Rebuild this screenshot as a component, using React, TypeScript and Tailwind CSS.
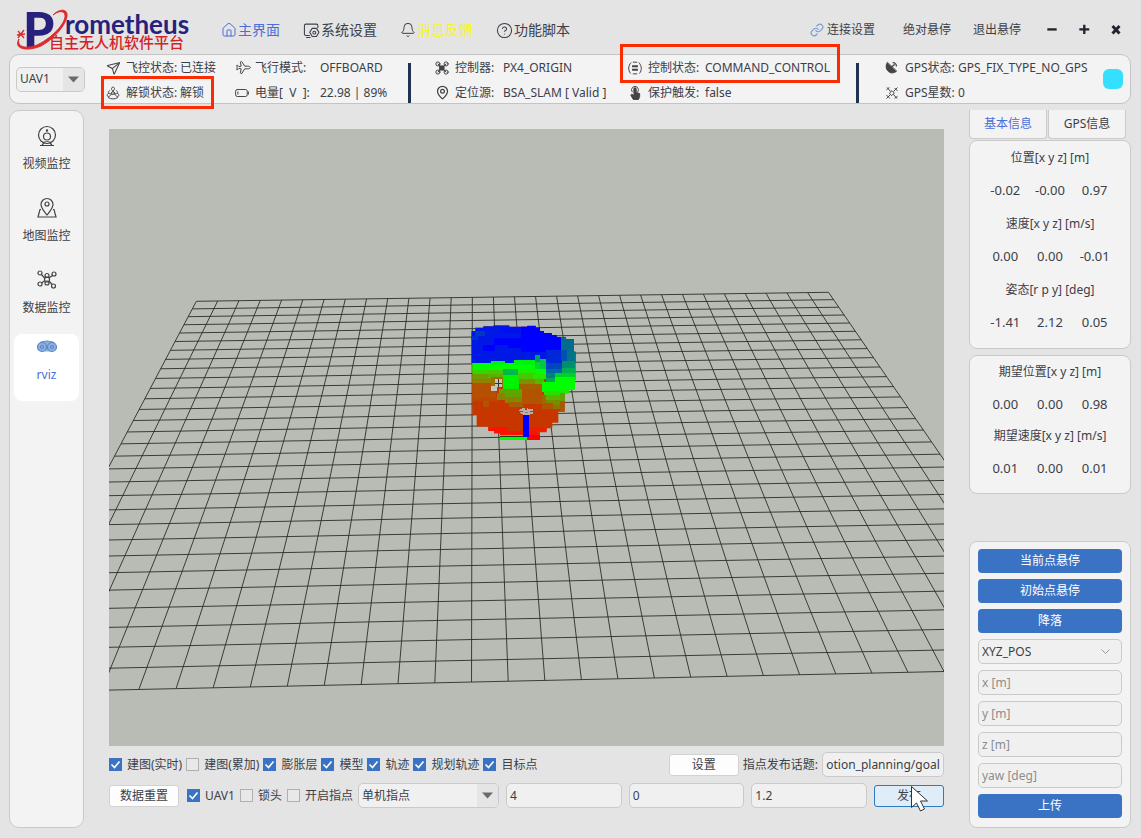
import { useEffect, useRef, type ReactNode } from "react";
import { Bell, CircleHelp, House, Link, MapPin, Plane, Send } from "lucide-react";

const GRID_CELLS = 30;

// corners of the ground plane inside the 835x617 viewport
const CORNERS = [
  [87.3, 172.3],
  [719.5, 163.3],
  [978.5, 539.3],
  [-119.5, 563.8],
];

// maps the unit square onto the ground plane in perspective
const project = (u: number, v: number) => {
  const [[x0, y0], [x1, y1], [x2, y2], [x3, y3]] = CORNERS;
  const dx1 = x1 - x2;
  const dx2 = x3 - x2;
  const dx3 = x0 - x1 + x2 - x3;
  const dy1 = y1 - y2;
  const dy2 = y3 - y2;
  const dy3 = y0 - y1 + y2 - y3;
  const det = dx1 * dy2 - dx2 * dy1;
  const g = (dx3 * dy2 - dx2 * dy3) / det;
  const h = (dx1 * dy3 - dx3 * dy1) / det;
  const w = g * u + h * v + 1;
  const x = ((x1 - x0 + g * x1) * u + (x3 - x0 + h * x3) * v + x0) / w;
  const y = ((y1 - y0 + g * y1) * u + (y3 - y0 + h * y3) * v + y0) / w;
  return `${x.toFixed(2)} ${y.toFixed(2)}`;
};

const gridPath = Array.from({ length: GRID_CELLS + 1 }, (_, i) => {
  const t = i / GRID_CELLS;
  return `M${project(t, 0)}L${project(t, 1)}M${project(0, t)}L${project(1, t)}`;
}).join("");

// voxels of the point cloud: x, y, width, height, colour
const voxels: [number, number, number, number, string][] = [
  [94, 75, 313, 115, "#0018e6"],
  [106, 93, 30, 16, "#0038c0"],
  [94, 109, 20, 12, "#0030d0"],
  [180, 84, 60, 14, "#0010f0"],
  [163, 114, 90, 22, "#0000ff"],
  [130, 135, 36, 18, "#0000ff"],
  [204, 126, 130, 18, "#0000ff"],
  [243, 77, 90, 80, "#0000ff"],
  [300, 96, 62, 58, "#0000ff"],
  [318, 150, 46, 44, "#0028d8"],
  [300, 160, 22, 14, "#0018e6"],
  [362, 110, 46, 48, "#006c90"],
  [362, 150, 18, 34, "#0050b0"],
  [380, 156, 28, 34, "#007488"],
  [366, 184, 42, 22, "#009070"],
  [366, 204, 42, 16, "#00b050"],
  [318, 190, 48, 18, "#0044c0"],
  [318, 206, 48, 16, "#0068a0"],
  [318, 220, 36, 16, "#008080"],
  [318, 234, 30, 12, "#00a858"],
  [345, 218, 62, 18, "#00d028"],
  [345, 232, 62, 38, "#00ff00"],
  [97, 188, 190, 24, "#00ff00"],
  [154, 184, 40, 10, "#00f010"],
  [222, 180, 70, 16, "#00f010"],
  [285, 166, 16, 24, "#00a060"],
  [285, 186, 32, 22, "#00d830"],
  [300, 178, 17, 28, "#00c840"],
  [97, 210, 48, 12, "#30d800"],
  [145, 210, 50, 12, "#48c800"],
  [97, 222, 60, 14, "#6c9c00"],
  [140, 222, 52, 12, "#58b000"],
  [97, 236, 56, 14, "#948000"],
  [97, 248, 70, 48, "#b45000"],
  [97, 290, 80, 14, "#bc4800"],
  [188, 208, 46, 20, "#00b850"],
  [188, 226, 48, 40, "#00f400"],
  [234, 208, 56, 14, "#18f000"],
  [288, 206, 29, 18, "#00ff00"],
  [234, 220, 50, 18, "#48c800"],
  [280, 222, 37, 16, "#28e400"],
  [236, 236, 50, 18, "#7c9000"],
  [284, 238, 28, 16, "#54b800"],
  [154, 232, 34, 28, "#9c7000"],
  [236, 252, 70, 18, "#a46000"],
  [306, 246, 62, 30, "#00ff00"],
  [312, 274, 56, 14, "#30dc00"],
  [318, 286, 50, 16, "#58b400"],
  [318, 300, 44, 16, "#788c00"],
  [338, 314, 30, 12, "#907400"],
  [366, 268, 20, 14, "#20e800"],
  [360, 280, 14, 26, "#58a800"],
  [360, 304, 14, 32, "#a85800"],
  [178, 266, 68, 28, "#60a400"],
  [170, 280, 24, 20, "#8c8000"],
  [196, 292, 50, 16, "#888400"],
  [206, 306, 42, 14, "#a46000"],
  [247, 268, 60, 44, "#b05400"],
  [306, 286, 12, 26, "#a06800"],
  [306, 310, 32, 18, "#b05400"],
  [128, 304, 20, 18, "#b05400"],
  [145, 382, 60, 24, "#ff1000"],
  [180, 392, 110, 28, "#f41400"],
  [268, 380, 56, 14, "#f01c00"],
  [240, 404, 60, 16, "#ff0000"],
];

const Viewport = () => (
  <svg
    className="block min-h-0 w-full flex-1 bg-[#b9bcb4]"
    viewBox="0 0 835 617"
    preserveAspectRatio="xMidYMid slice"
    role="img"
    aria-label="rviz"
  >
    <path d={gridPath} stroke="#2c2e2a" strokeWidth="1" strokeOpacity="0.9" fill="none" />
    <clipPath id="cloud">
      <path d="M94 93H106V83H130V79H160V76H208V80H262V77H287V83H300V93H312V99H335V105H350V112H378V118H402V155H407V240H405V270H387V280H374V335H355V368H337V385H320V397H300V420H262V408H205V404H180V400H162V393H145V380H110V345H97V190H94Z" />
    </clipPath>
    <g transform="translate(331 171) scale(0.3333)" shapeRendering="crispEdges">
      <g clipPath="url(#cloud)">
        <rect x="90" y="70" width="320" height="352" fill="#c83600" />
        {voxels.map(([x, y, w, h, fill], i) => (
          <rect key={i} x={x} y={y} width={w} height={h} fill={fill} />
        ))}
      </g>
      <path d="M164 238h22v24h-14v12h-18v-16h10z" fill="#c4c4be" />
      <path d="M164 250h22M176 238v24" stroke="#333" strokeWidth="3" />
      <path d="M180 406h80v14h-80z" fill="#00ff00" />
      <path d="M180 411h80" stroke="#1c3c10" strokeWidth="3" />
      <path d="M250 342h16v70h-16z" fill="#0000ff" />
      <path
        d="M238 332l16-6M262 328l18 4M242 340l14-4M264 338l14 2M252 332h14v10h-14z"
        stroke="#b8b0a8"
        strokeWidth="6"
        fill="#888"
      />
    </g>
  </svg>
);

const Logo = () => (
  <svg className="h-[44px] w-[176px] shrink-0 overflow-visible" viewBox="0 0 176 44" role="img">
    <text x="6" y="40" fill="#27207c" fontFamily="Lato" fontWeight="900" fontSize="50">
      P
    </text>
    <text x="48" y="26" fill="#27207c" fontFamily="Lato" fontWeight="700" fontSize="26">
      rometheus
    </text>
    <text
      x="32"
      y="40"
      fill="#d2232a"
      fontFamily="Noto Sans CJK SC"
      fontWeight="500"
      fontSize="15"
    >
      自主无人机软件平台
    </text>
    <path
      d="M2 31C-1 40 12 42 24 35C38 27 49 14 48 7C47 2 41 3 36 7C43 0 51 1 50 8C49 17 37 31 24 38C10 44 -4 41 2 31Z"
      fill="#dc2b2b"
      stroke="#dc2b2b"
    />
    <path d="M1 23l6 7M7 22l-6 8M0 27l8-1" stroke="#dc2b2b" strokeWidth="1.4" />
  </svg>
);

const Svg = ({
  children,
  size = 14,
  weight = 1.7,
}: {
  children: ReactNode;
  size?: number;
  weight?: number;
}) => (
  <svg
    width={size}
    height={size}
    viewBox="0 0 24 24"
    fill="none"
    stroke="currentColor"
    strokeWidth={weight}
    strokeLinecap="round"
    strokeLinejoin="round"
    aria-hidden="true"
  >
    {children}
  </svg>
);

const RotorIcon = () => (
  <Svg>
    <circle cx="12" cy="12" r="2.5" />
    <path d="M12 9C8 6 9 2 12 2s4 4 0 7M9 14c-2 5-7 5-7 2s4-5 7-2M15 14c2 5 7 5 7 2s-4-5-7-2M4 20c4 3 12 3 16 0M6 8c-2 2-2 3-2 4M18 8c2 2 2 3 2 4" />
  </Svg>
);

const BatteryIcon = () => (
  <Svg>
    <rect x="1" y="6" width="20" height="12" rx="3" />
    <path d="M23 10v4M5 10v4" />
  </Svg>
);

const QuadIcon = () => (
  <Svg>
    <circle cx="5" cy="5" r="3.5" />
    <circle cx="19" cy="5" r="3.5" />
    <circle cx="5" cy="19" r="3.5" />
    <circle cx="19" cy="19" r="3.5" />
    <path d="M5 5l14 14M19 5L5 19" />
    <rect x="8.500" y="8.500" width="7" height="7" fill="currentColor" />
  </Svg>
);

const ControlIcon = () => (
  <Svg>
    <path d="M5 3C0 8 0 16 4 21M19 3c5 6 5 13 1 18M9 2h6M9 22h6" />
    <path d="M7 9h10M7 15h10" strokeWidth="3.500" strokeLinecap="butt" />
  </Svg>
);

const TouchIcon = () => (
  <Svg>
    <path d="M7 10a6 6 0 1 1 10 0" />
    <path
      d="M10 5a2 2 0 0 1 4 0v6l6 2v5l-2 5H9l-4-7 1-2 4 2z"
      fill="currentColor"
    />
  </Svg>
);

const DishIcon = () => (
  <Svg size={13}>
    <path d="M4 3C-1 11 4 21 12 22c4 0 7-1 9-3z" fill="currentColor" />
    <path d="M12 11l5-4M15 3c3 0 6 3 6 6" strokeWidth="2.500" />
  </Svg>
);

const SatelliteIcon = () => (
  <Svg>
    <path d="M8 12l4-4 4 4-4 4zM4 3l5 6M20 21l-5-6M15 9l6-6M17 4l4 4M3 21l6-6M3 16l5 5M3 6l4-3M17 21l4-3" />
  </Svg>
);

const GearScreenIcon = () => (
  <Svg size={17} weight={1.5}>
    <path d="M9 19H4a2 2 0 0 1-2-2V5a2 2 0 0 1 2-2h15a2 2 0 0 1 2 2v3M5 22h5" />
    <path d="M13 9h6l3.500 5.500-3.500 6h-6l-3.500-6z" />
    <circle cx="16" cy="15" r="2" />
  </Svg>
);

const CameraIcon = () => (
  <svg width="22" height="24" viewBox="0 0 22 24" fill="none" stroke="#444" strokeWidth="1.2">
    <circle cx="11" cy="11" r="8.500" />
    <circle cx="11" cy="12.500" r="3.500" />
    <circle cx="11" cy="6.500" r="0.600" fill="#444" />
    <path d="M8 19l-2 2M14 19l2 2M4 21.500h14M7 18.500c2-1 6-1 8 0" />
  </svg>
);

const MapIcon = () => (
  <svg width="22" height="24" viewBox="0 0 22 24" fill="none" stroke="#444" strokeWidth="1.2">
    <path d="M11 19C7 14 5 12 5 8.500a6 6 0 0 1 12 0C17 12 15 14 11 19z" />
    <circle cx="11" cy="8" r="2" />
    <path d="M5 13.500H4L2 21h18l-2-7.500h-1" />
  </svg>
);

const DataIcon = () => (
  <svg width="22" height="24" viewBox="0 0 22 24" fill="none" stroke="#444" strokeWidth="1.2">
    <circle cx="4" cy="5" r="2" />
    <circle cx="18" cy="6" r="2" />
    <circle cx="4" cy="16" r="2" />
    <circle cx="17.500" cy="18" r="2" />
    <circle cx="11" cy="7.500" r="2" />
    <circle cx="11" cy="11.500" r="2.500" />
    <circle cx="11" cy="15" r="2" />
    <path d="M5.500 6.500l3.500 4M16.500 7.500L13 10M5.500 15l3.500-2.500M16 16.500l-3-3.500" />
  </svg>
);

const RvizIcon = () => (
  <svg width="22" height="24" viewBox="0 0 22 24" fill="none" stroke="#5c86c4" strokeWidth="1.2">
    <path d="M4 2.500q7-3 14 0l3 5-5 4H6l-5-4z" fill="#8fb0df" stroke="none" />
    <circle cx="6" cy="7" r="4.500" fill="#8fb0df" />
    <circle cx="16" cy="7" r="4.500" fill="#8fb0df" />
    <circle cx="6" cy="7" r="1.500" />
    <circle cx="16" cy="7" r="1.500" />
    <path d="M4 2.500q7-3 14 0" />
  </svg>
);

const Triangle = () => (
  <span className="pointer-events-none absolute inset-y-px right-px grid w-[21px] place-items-center rounded-r bg-[#e5e5e5]">
    <svg width="11" height="7" viewBox="0 0 11 7" fill="#6a6a6a" aria-hidden="true">
      <path d="M0 0.500h11L5.500 6.500z" />
    </svg>
  </span>
);

const Status = ({
  icon,
  label,
  value,
  labelWidth,
  marked,
}: {
  icon: ReactNode;
  label: string;
  value: string;
  labelWidth: string;
  marked?: string;
}) => (
  <div className="relative flex h-[25px] items-center whitespace-pre">
    <span className="w-5 shrink-0 text-[#444]">{icon}</span>
    <span className={labelWidth}>{label}</span>
    <span>{value}</span>
    {marked && (
      <span className={`pointer-events-none absolute z-10 border-3 border-[#fb2b04] ${marked}`} />
    )}
  </div>
);

const Check = ({ label, checked = false }: { label: string; checked?: boolean }) => (
  <label className="flex shrink-0 items-center gap-[5px]">
    <span className="relative block size-[13px]">
      <input
        type="checkbox"
        defaultChecked={checked}
        className="peer block size-[13px] appearance-none border border-[#b0b0b0] bg-[#e8e8e8] checked:border-[#3a73c4] checked:bg-[#3a73c4]"
      />
      <svg
        className="pointer-events-none invisible absolute inset-0 peer-checked:visible"
        viewBox="0 0 13 13"
        fill="none"
        stroke="#fff"
        strokeWidth="1.600"
      >
        <path d="M2.500 6.500l3 3 5-6" />
      </svg>
    </span>
    {label}
  </label>
);

const fieldClass =
  "h-[25px] w-full min-w-0 rounded-[5px] border border-[#cacaca] bg-[#f0f0f0] px-[3px] placeholder:text-[#8c8c8c]";

const Values = ({ values }: { values: string[] }) => (
  <div className="grid grid-cols-3 px-[13px] text-[13px]">
    {values.map((value, i) => (
      <span key={i}>{value}</span>
    ))}
  </div>
);

const blueButton = "h-6 w-full rounded bg-[#3a73c4] text-white";

const whiteButton =
  "h-[22px] w-[70px] shrink-0 rounded-[3px] border border-[#d2d2d2] bg-[#fdfdfd]";

const menu = [
  { label: "视频监控", icon: <CameraIcon /> },
  { label: "地图监控", icon: <MapIcon /> },
  { label: "数据监控", icon: <DataIcon /> },
];

const App = () => {
  const topic = useRef<HTMLInputElement>(null);

  // keep the end of the topic name in view
  useEffect(() => {
    if (topic.current) topic.current.scrollLeft = topic.current.scrollWidth;
  }, []);

  return (
    <div className="flex h-screen min-h-[780px] min-w-[1100px] flex-col bg-[#e4e4e4] pr-[10px] pb-[10px] pl-[9px] font-['Noto_Sans','Noto_Sans_CJK_SC',sans-serif] text-[12px] leading-4 text-[#3c4048]">
      <header className="flex h-[54px] shrink-0 items-center pt-[6px] pl-2">
        <Logo />
        <nav className="flex items-center gap-[23px] pl-7 text-[14px]">
          <a href="#" className="flex items-center gap-px text-[#4a6fd8]">
            <House size={16} strokeWidth={1.5} /> 主界面
          </a>
          <a href="#" className="flex items-center gap-px">
            <GearScreenIcon /> 系统设置
          </a>
          <a href="#" className="flex items-center gap-px">
            <Bell size={16} strokeWidth={1.5} />
            <span className="text-[#f4f42c]">消息反馈</span>
          </a>
          <a href="#" className="flex items-center gap-px">
            <CircleHelp size={17} strokeWidth={1.5} /> 功能脚本
          </a>
        </nav>
        <div className="ml-auto flex items-center">
          <button className="mr-7 flex items-center gap-[3px]">
            <Link size={14} className="text-[#7c9cd0]" /> 连接设置
          </button>
          <button className="mr-[22px]">绝对悬停</button>
          <button className="mr-6">退出悬停</button>
          <div className="flex gap-[18px] pr-2 text-[#20242c]">
            <button aria-label="minimize">
              <Svg>
                <path d="M4 11h16" strokeWidth="4" strokeLinecap="butt" />
              </Svg>
            </button>
            <button aria-label="maximize">
              <Svg>
                <path d="M4 11h17M12.500 3v16" strokeWidth="4" strokeLinecap="butt" />
              </Svg>
            </button>
            <button aria-label="close">
              <Svg>
                <path d="M6 5l12 13M18 5L6 18" strokeWidth="5" strokeLinecap="butt" />
              </Svg>
            </button>
          </div>
        </div>
      </header>

      <section className="flex h-[50px] shrink-0 rounded-[10px] border border-[#c4c4c4] bg-[#f3f3f3]">
        <div className="relative mr-[21px] ml-[6px] h-[25px] w-[69px] shrink-0 self-center">
          <select aria-label="UAV" className={`${fieldClass} appearance-none`}>
            <option>UAV1</option>
          </select>
          <Triangle />
        </div>
        <div className="w-[129px] shrink-0">
          <Status icon={<Send size={14} strokeWidth={1.8} className="rotate-6" />} label="飞控状态:" value="已连接" labelWidth="w-[54px]" />
          <Status
            icon={<RotorIcon />}
            label="解锁状态:"
            value="解锁"
            labelWidth="w-[54px]"
            marked="-top-1 right-[21px] -bottom-1 -left-[5px]"
          />
        </div>
        <div className="w-[173px] shrink-0">
          <Status icon={<Plane size={15} strokeWidth={1.5} className="rotate-45" />} label="飞行模式:" value="OFFBOARD" labelWidth="w-[65px]" />
          <Status icon={<BatteryIcon />} label="电量[  V  ]:" value="22.98 | 89%" labelWidth="w-[65px]" />
        </div>
        <div className="mt-2 mr-6 w-[3px] shrink-0 bg-[#1f3350]" />
        <div className="w-[193px] shrink-0">
          <Status icon={<QuadIcon />} label="控制器:" value="PX4_ORIGIN" labelWidth="w-[48px]" />
          <Status icon={<MapPin size={15} strokeWidth={2} />} label="定位源:" value="BSA_SLAM [ Valid ]" labelWidth="w-[48px]" />
        </div>
        <div className="w-[228px] shrink-0">
          <Status
            icon={<ControlIcon />}
            label="控制状态:"
            value="COMMAND_CONTROL"
            labelWidth="w-[57px]"
            marked="-top-[11px] right-4 -bottom-[3px] -left-2"
          />
          <Status icon={<TouchIcon />} label="保护触发:" value="false" labelWidth="w-[57px]" />
        </div>
        <div className="mt-2 mr-[26px] w-[3px] shrink-0 bg-[#1f3350]" />
        <div className="flex-1">
          <Status icon={<DishIcon />} label="GPS状态:" value="GPS_FIX_TYPE_NO_GPS" labelWidth="w-[53px]" />
          <Status icon={<SatelliteIcon />} label="GPS星数:" value="0" labelWidth="w-[53px]" />
        </div>
        <div className="mr-[7px] size-5 shrink-0 self-center rounded-[6px] bg-[#35e0ff]" />
      </section>

      <main className="mt-[6px] flex min-h-0 flex-1 gap-[25px]">
        <aside className="flex w-[75px] shrink-0 flex-col gap-[5px] rounded-[10px] border border-[#cacaca] bg-[#f3f3f3] px-1 pt-[7px]">
          {menu.map(({ label, icon }) => (
            <button key={label} className="flex h-[67px] flex-col items-center gap-2 pt-[6px]">
              {icon}
              {label}
            </button>
          ))}
          <button className="flex h-[67px] flex-col items-center gap-[3px] rounded-lg bg-white pt-[6px] text-[#4a6fd8]">
            <RvizIcon />
            rviz
          </button>
        </aside>

        <section className="flex min-w-0 flex-1 flex-col pt-[19px] pb-5">
          <Viewport />
          <div className="mt-[6px] flex h-[25px] items-center gap-1">
            <Check label="建图(实时)" checked />
            <Check label="建图(累加)" />
            <Check label="膨胀层" checked />
            <Check label="模型" checked />
            <Check label="轨迹" checked />
            <Check label="规划轨迹" checked />
            <Check label="目标点" checked />
            <button className={`${whiteButton} ml-auto`}>设置</button>
            <label htmlFor="topic" className="shrink-0">
              指点发布话题:
            </label>
            <div className="w-[122px] shrink-0">
              <input id="topic" ref={topic} className={fieldClass} defaultValue="motion_planning/goal" />
            </div>
          </div>
          <div className="mt-[6px] flex h-[25px] items-center gap-[7px]">
            <div className="flex shrink-0 items-center gap-[5px]">
              <button className={`${whiteButton} mr-[3px]`}>数据重置</button>
              <Check label="UAV1" checked />
              <Check label="锁头" />
              <Check label="开启指点" />
              <div className="relative w-[141px] shrink-0">
                <select aria-label="指点" className={`${fieldClass} block appearance-none`}>
                  <option>单机指点</option>
                </select>
                <Triangle />
              </div>
            </div>
            <input aria-label="x" className={fieldClass} defaultValue="4" />
            <input aria-label="y" className={fieldClass} defaultValue="0" />
            <input aria-label="z" className={fieldClass} defaultValue="1.2" />
            <button className="relative h-[22px] w-[70px] shrink-0 rounded-[3px] border border-[#2a7ac4] bg-[#dfedf8]">
              发布
              <svg
                className="absolute -top-px left-[35px]"
                width="20"
                height="27"
                viewBox="0 0 20 27"
                fill="#fff"
                stroke="#333"
                aria-hidden="true"
              >
                <path d="M1.500 1.500v21l5-4.500 4 8 4-2-4-8h7z" />
              </svg>
            </button>
          </div>
        </section>

        <aside className="flex w-[162px] shrink-0 flex-col text-center">
          <div role="tablist" className="flex h-[29px] shrink-0 gap-px pr-[5px]">
            <button role="tab" aria-selected="true" className="flex-1 rounded-b border border-t-0 border-[#cacaca] bg-[#f3f3f3] text-[#4a6fd8]">
              基本信息
            </button>
            <button role="tab" aria-selected="false" className="flex-1 rounded-b border border-t-0 border-[#cacaca] bg-[#f3f3f3]">
              GPS信息
            </button>
          </div>
          <div className="mt-px rounded-[8px] border border-[#cacaca] bg-[#f3f3f3] pb-[9px] leading-[33px]">
            <h2>位置[x y z] [m]</h2>
            <Values values={["-0.02", "-0.00", "0.97"]} />
            <h2>速度[x y z] [m/s]</h2>
            <Values values={["0.00", "0.00", "-0.01"]} />
            <h2>姿态[r p y] [deg]</h2>
            <Values values={["-1.41", "2.12", "0.05"]} />
          </div>
          <div className="mt-[6px] rounded-[8px] border border-[#cacaca] bg-[#f3f3f3] pb-[9px] leading-8">
            <h2>期望位置[x y z] [m]</h2>
            <Values values={["0.00", "0.00", "0.98"]} />
            <h2>期望速度[x y z] [m/s]</h2>
            <Values values={["0.01", "0.00", "0.01"]} />
          </div>
          <div className="mt-auto flex flex-col gap-[6px] rounded-[8px] border border-[#cacaca] bg-[#f3f3f3] px-2 pt-[7px] pb-[9px]">
            <button className={blueButton}>当前点悬停</button>
            <button className={blueButton}>初始点悬停</button>
            <button className={blueButton}>降落</button>
            <div className="relative">
              <select aria-label="控制模式" className={`${fieldClass} block appearance-none`}>
                <option>XYZ_POS</option>
              </select>
              <svg
                className="pointer-events-none absolute top-[10px] right-3"
                width="9"
                height="6"
                viewBox="0 0 9 6"
                fill="none"
                stroke="#999"
                aria-hidden="true"
              >
                <path d="M0.500 0.500l4 4 4-4" />
              </svg>
            </div>
            {["x [m]", "y [m]", "z [m]", "yaw [deg]"].map((name) => (
              <input key={name} aria-label={name} placeholder={name} className={fieldClass} />
            ))}
            <button className={blueButton}>上传</button>
          </div>
        </aside>
      </main>
    </div>
  );
};

export default App;
